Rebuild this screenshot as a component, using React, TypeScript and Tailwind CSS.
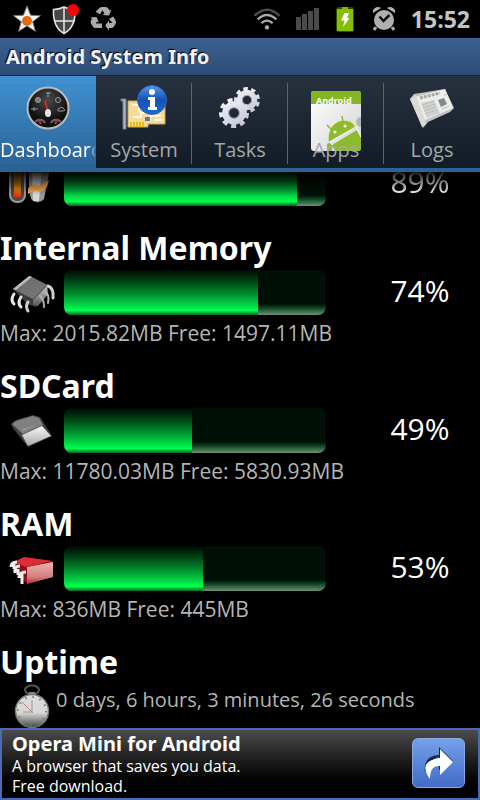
import type { ReactNode } from "react";

function StarIcon() {
  return (
    <svg width="32" height="32" viewBox="0 0 32 32" aria-hidden="true">
      <path d="M16 3l3.600 9.200 9.900.5-7.800 6 2.700 9.600L16 23l-8.400 5.300 2.700-9.600-7.800-6 9.900-.5z" fill="#f4f4f4" stroke="#777" strokeWidth="1" />
      <circle cx="16" cy="18" r="5" fill="#e66a10" />
    </svg>
  );
}

function ShieldIcon() {
  return (
    <svg width="32" height="32" viewBox="0 0 32 32" aria-hidden="true">
      <path d="M14 4c-4 2-7 2.500-10.500 2.500C3 17 6 26 14 30.500c8.500-4.500 11.500-13.500 11-24C22 6.500 18 6 14 4z" fill="#484848" stroke="#e6e6e6" strokeWidth="1.500" />
      <path d="M14 4v26M4 18h21" stroke="#e6e6e6" strokeWidth="1.500" />
      <circle cx="23" cy="7" r="6" fill="#f00808" />
    </svg>
  );
}

function RecycleIcon() {
  return (
    <svg width="28" height="26" viewBox="0 0 28 26" fill="#aaa" aria-hidden="true">
      <path d="M10 2.500Q11 1 12.500 1H17q1.500 0 2.300 1.500l1.200 2 2-1L20 9.500l-6.500-.5 2-1.200-2-3.500-2.500 4-4.500-2.500z" />
      <path d="M24.300 10.500l2.300 4q1 1.700 0 3.200l-1.800 3q-.8 1.300-2.500 1.300H20v2.500l-3.800-5 3.800-5v2.500h3.500l-3.500-4z" />
      <path d="M13 22H6.500q-1.700 0-2.500-1.300l-2-3.200q-.8-1.500 0-3l1-1.800L1 11.500l6.500-.5 2.500 5.500-2-1-1.200 2H13z" />
    </svg>
  );
}

function WifiIcon() {
  return (
    <svg width="28" height="24" viewBox="0 0 30 24" fill="none" strokeWidth="2.500" aria-hidden="true">
      <path d="M1.500 8.500Q15-4.500 28.500 8.500" stroke="#4b4b4b" />
      <path d="M5 12.500Q15 3 25 12.500" stroke="#aaa" />
      <path d="M9 16.500Q15 11 21 16.500" stroke="#aaa" />
      <circle cx="15" cy="21" r="2.200" fill="#b4b4b4" />
    </svg>
  );
}

function SignalIcon() {
  return (
    <svg width="24" height="22" viewBox="0 0 24 22" fill="#4a4a4a" aria-hidden="true">
      <path d="M0 9h5v13H0zM6 6h5v16H6zM12 3h5v19h-5zM18 0h5v22h-5z" />
    </svg>
  );
}

function BatteryIcon() {
  return (
    <svg width="22" height="28" viewBox="0 0 22 28" aria-hidden="true">
      <rect x="1" y="2" width="18" height="25" rx="3" fill="#2c4d00" />
      <path d="M7 2h6v2h5v22H2V4h5z" fill="#84bd0a" />
      <path d="M9.500 8H14l-2 5h2.500L8 22l1.500-6.500H6z" fill="#fff" />
    </svg>
  );
}

function AlarmIcon() {
  return (
    <svg width="24" height="26" viewBox="0 0 24 26" aria-hidden="true">
      <path d="M4 21l-2 3M20 21l2 3" stroke="#b0b0b0" strokeWidth="3" />
      <path d="M1 7q-1-3 2-5t6 0zM23 7q1-3-2-5t-6 0z" fill="#b0b0b0" />
      <circle cx="12" cy="14" r="10" fill="#b0b0b0" />
      <path d="M7.500 10.500l4 4.500 6-6" fill="none" stroke="#111" strokeWidth="2.500" />
    </svg>
  );
}

function GaugeIcon() {
  return (
    <svg width="48" height="48" viewBox="0 0 48 48" aria-hidden="true">
      <defs>
        <radialGradient id="dial" cy=".3">
          <stop offset="0" stopColor="#4a4a4a" />
          <stop offset="1" stopColor="#111" />
        </radialGradient>
      </defs>
      <circle cx="24" cy="24" r="20.500" fill="url(#dial)" stroke="#b9bcbf" strokeWidth="2" />
      <g fill="none" stroke="#999" strokeWidth="1">
        <circle cx="14" cy="16" r="2.500" fill="#777" />
        <circle cx="34" cy="16" r="2.500" />
        <path d="M7 25h7M10 23v4M34 27q-1-3 2-3 3-2 4 1 2 2-1 2zM22 9h5M24 8v5" />
      </g>
      <path d="M11 38a6 6 0 0 1 10 1M37 38a6 6 0 0 0-10 1" fill="none" stroke="#666" strokeWidth="2" />
      <path d="M14 35l3 5M34 35l-3 5" stroke="#c33" strokeWidth="2" />
      <path d="M21 17l3 11" stroke="#d02a22" strokeWidth="2" />
      <ellipse cx="24" cy="29" rx="3" ry="4" fill="#e4e4e4" />
    </svg>
  );
}

function SystemIcon() {
  return (
    <svg width="48" height="48" viewBox="0 0 48 48" aria-hidden="true">
      <defs>
        <linearGradient id="info" x2="0" y2="1">
          <stop offset="0" stopColor="#5599ea" />
          <stop offset=".5" stopColor="#1450b4" />
          <stop offset="1" stopColor="#1c6bd6" />
        </linearGradient>
      </defs>
      <path d="M8 17h37v23H28v3H8z" fill="#f2dc98" stroke="#c7a65a" />
      <path d="M11 38v5M14 38v5M17 38v5M20 38v5M23 38v5" stroke="#e7ba20" strokeWidth="2" />
      <path d="M12 21h7v6h6M13 33h8v-4h7M30 37v-5h11M35 36h7" fill="none" stroke="#fff8dd" strokeWidth="2" />
      <path d="M25 33h5v4h-5z" fill="#5e7893" />
      <path d="M1 15h5v30H3V17H1z" fill="#b2b4be" stroke="#777a86" />
      <circle cx="32" cy="16" r="14.500" fill="url(#info)" stroke="#2c66b4" />
      <circle cx="32" cy="8" r="3" fill="#fff" />
      <path d="M28 13h7v10h2v3h-9v-3h2v-7h-2z" fill="#fff" />
    </svg>
  );
}

function Gear({ x, y, r, turn }: { x: number; y: number; r: number; turn: number }) {
  return (
    <g transform={`translate(${x} ${y}) rotate(${turn}) scale(${r / 14})`} stroke="url(#steel)" fill="none">
      <circle r="8" strokeWidth="6" />
      <circle r="12" strokeWidth="4" strokeDasharray="4.600 3.778" />
      <circle r="5" stroke="#a2a4b4" strokeWidth="1" />
    </g>
  );
}

function GearsIcon() {
  return (
    <svg width="48" height="48" viewBox="0 0 48 48" aria-hidden="true">
      <defs>
        <linearGradient id="steel" gradientUnits="userSpaceOnUse" x1="-10" y1="-14" x2="8" y2="14">
          <stop offset="0" stopColor="#f6f6fb" />
          <stop offset="1" stopColor="#c3c4d2" />
        </linearGradient>
      </defs>
      <Gear x={31} y={16} r={13} turn={10} />
      <Gear x={18} y={29} r={15} turn={0} />
    </svg>
  );
}

function AppsIcon() {
  return (
    <svg width="50" height="60" viewBox="0 0 50 60" aria-hidden="true">
      <defs>
        <clipPath id="sheet"><rect width="50" height="60" rx="3" /></clipPath>
        <linearGradient id="paper" x2="1" y2="1">
          <stop offset="0" stopColor="#fff" />
          <stop offset="1" stopColor="#d4d4d4" />
        </linearGradient>
      </defs>
      <g clipPath="url(#sheet)">
        <rect width="50" height="60" fill="url(#paper)" />
        <rect width="50" height="13" fill="#84b522" />
        <text x="5" y="13" fill="#fff" fontSize="9" fontWeight="700" fontFamily="Noto Sans, sans-serif">Android</text>
        <path d="M18 51C16 36 26 28 36 30q6 1 9 7z" fill="#8dbb2c" />
        <path d="M21 54L46 39l4 7v14H24zM16 53q3-3 5 2v5h-5z" fill="#8dbb2c" />
        <path d="M16 34l5 5M31 25l1 6" stroke="#8dbb2c" strokeWidth="1.500" />
        <path d="M19 51l26-15 5 10" fill="none" stroke="#eee" strokeWidth="1.500" />
        <circle cx="24" cy="41" r="1.500" fill="#fff" />
        <circle cx="34" cy="35" r="1.500" fill="#fff" />
        <circle cx="50" cy="31" r="5" fill="#b0b5b8" />
      </g>
    </svg>
  );
}

function LogsIcon() {
  return (
    <svg width="48" height="48" viewBox="0 0 48 48" aria-hidden="true">
      <path d="M2 15l4-5 31-5 9 19-4 4-22 10-5 6z" fill="#bfc3c2" />
      <path d="M7 13l30-8 8 19-28 12z" fill="#eceeea" />
      <path d="M2 15l6-4 10 29-4 3z" fill="#d9dbd7" />
      <path d="M12 14l20-5" stroke="#aaa" strokeWidth="3" strokeDasharray="3 1" />
      <path d="M13 19l13-3 6 13-13 5z" fill="#cfd2d0" />
      <path d="M14 21l12-4M15 24l12-4M16 27l12-4M17 30l12-4M34 25l7-3M36 11l3-1" stroke="#b9bdbb" strokeWidth="1" />
      <path d="M30 16l6-2 3 6-6 3z" fill="#85898b" />
    </svg>
  );
}

function BatteryTemperatureIcon() {
  return (
    <svg width="48" height="45" viewBox="0 0 48 45" aria-hidden="true">
      <defs>
        <linearGradient id="heat" x2="0" y2="1">
          <stop offset=".4" stopColor="#a66d12" />
          <stop offset=".7" stopColor="#e88b10" />
          <stop offset="1" stopColor="#dc1808" />
        </linearGradient>
      </defs>
      <rect x="2" y="2" width="15" height="39" rx="7" fill="#4a4a4a" stroke="#999" strokeWidth="2" />
      <rect x="6" y="8" width="7" height="29" rx="2" fill="url(#heat)" />
      <path d="M21 2h22l-7 36q-5 6-12 1-4-5-3-37z" fill="#999" />
      <path d="M24 5h10l-3 35h-6z" fill="#d5d5d5" />
      <path d="M20 27q7-6 12-2 4-4 9-6-2 12-10 12-4-3-11 2z" fill="#f3ad50" />
    </svg>
  );
}

function ChipIcon() {
  return (
    <svg width="48" height="45" viewBox="0 0 48 45" aria-hidden="true">
      <defs>
        <linearGradient id="chip" x2="1" y2="1">
          <stop offset="0" stopColor="#6a6a6a" />
          <stop offset="1" stopColor="#787878" />
        </linearGradient>
        <linearGradient id="side" x2="0" y2="1">
          <stop offset="0" stopColor="#ccc" />
          <stop offset="1" stopColor="#555" />
        </linearGradient>
      </defs>
      <path d="M5 19L22 6l18 9-2 12-10 10-9-3z" fill="#3c3c3c" />
      <path d="M5 19L22 6l17 9-14 14z" fill="url(#chip)" />
      <path d="M5 19L21 6l3 1L8 20z" fill="#bbb" />
      <path d="M25 30l14-14 1 8-10 12-5-1z" fill="url(#side)" />
      <g fill="none" strokeWidth="3" strokeLinecap="round">
        <path d="M6 24q-4 6 0 10M13 27q-4 6 0 10" stroke="#e6e6e6" />
        <path d="M20 32q-3 4 0 9M40 16q6 2 5 12" stroke="#cfcfcf" />
        <path d="M36 21q6 3 4 12M32 26q4 3 4 11" stroke="#b4b4b4" strokeWidth="2" />
      </g>
    </svg>
  );
}

function SdCardIcon() {
  return (
    <svg width="48" height="45" viewBox="0 0 48 45" aria-hidden="true">
      <defs>
        <linearGradient id="label" x2="0" y2="1">
          <stop offset="0" stopColor="#f8f8f8" />
          <stop offset="1" stopColor="#aaa" />
        </linearGradient>
      </defs>
      <path d="M3 16l5-4 17-5 7 2 12 19-24 11L5 20z" fill="#444" />
      <path d="M4 16l4-3 17-5 6 2 4 7-20 9z" fill="#808080" />
      <path d="M14 27l20-9 9 10-23 10z" fill="url(#label)" />
      <path d="M14 21l14-4-13 6z" fill="#999" />
    </svg>
  );
}

function RamIcon() {
  return (
    <svg width="48" height="45" viewBox="0 0 48 45" aria-hidden="true">
      <defs>
        <linearGradient id="case" x2="0" y2="1">
          <stop offset="0" stopColor="#f0b4b4" />
          <stop offset=".7" stopColor="#cf7c7c" />
          <stop offset="1" stopColor="#b02a30" />
        </linearGradient>
      </defs>
      <path d="M6 16l10-5 28 4 1 16-26 7L8 26z" fill="#8c1218" />
      <path d="M19 21l26-5v15l-26 7z" fill="url(#case)" />
      <path d="M6 16l10-5 28 4-26 6z" fill="#dc2c34" />
      <g fill="none" stroke="#eee" strokeWidth="3">
        <path d="M9 16q-6 0-6 5M6 18v5M12 20q-6 0-5 7M10 23v6M18 26q-7 0-7 6M14 27v11" />
      </g>
    </svg>
  );
}

function StopwatchIcon() {
  return (
    <svg width="36" height="45" viewBox="0 0 36 45" aria-hidden="true">
      <defs>
        <linearGradient id="face" x2="0" y2="1">
          <stop offset="0" stopColor="#ddd" />
          <stop offset=".55" stopColor="#d8d8d8" />
          <stop offset="1" stopColor="#444" />
        </linearGradient>
      </defs>
      <ellipse cx="18" cy="6" rx="7" ry="4.500" fill="none" stroke="#555" strokeWidth="2" />
      <path d="M15 8h6v5h-6z" fill="#888" />
      <circle cx="18" cy="27" r="16.500" fill="url(#face)" stroke="#777" strokeWidth="1.500" />
      <circle cx="18" cy="27" r="14" fill="none" stroke="#777" strokeWidth="2" strokeDasharray="1.500 5.830" />
      <path d="M18 28V16M18 28H9" stroke="#999" />
      <path d="M19 29L8 18" stroke="#c9807a" strokeWidth="1" />
    </svg>
  );
}

function ShareArrowIcon() {
  return (
    <svg width="32" height="34" viewBox="0 0 32 34" aria-hidden="true">
      <path d="M16 1l14 14-14 9V11Q5 14 2 26 0 10 16 9z" fill="#10264a" />
      <path d="M17 3l13 13-13 13v-9q-10-1-10 13-13-18 10-21z" fill="#fff" />
    </svg>
  );
}

const tabs: { name: string; icon: ReactNode }[] = [
  { name: "Dashboard", icon: <GaugeIcon /> },
  { name: "System", icon: <SystemIcon /> },
  { name: "Tasks", icon: <GearsIcon /> },
  { name: "Apps", icon: <AppsIcon /> },
  { name: "Logs", icon: <LogsIcon /> },
];

const meters = [
  { name: "Internal Memory", icon: <ChipIcon />, value: 74, detail: "Max: 2015.82MB Free: 1497.11MB" },
  { name: "SDCard", icon: <SdCardIcon />, value: 49, detail: "Max: 11780.03MB Free: 5830.93MB" },
  { name: "RAM", icon: <RamIcon />, value: 53, detail: "Max: 836MB Free: 445MB" },
];

function MeterRow({ icon, value }: { icon: ReactNode; value: number }) {
  return (
    <div className="flex h-[45px] items-center">
      <div className="flex w-16 shrink-0 justify-center">{icon}</div>
      <div className="h-full min-w-0 flex-1 overflow-hidden rounded-lg bg-linear-to-b from-[#001006] from-75% via-[#1d5a33] via-88% to-[#6f8f78]">
        <div
          className="h-full bg-linear-to-b from-[#000a03] via-[#00ff50] via-90% to-[#00641f]"
          style={{ width: `${value}%` }}
        />
      </div>
      <div className="ml-[34px] h-full w-[120px] shrink-0 text-center text-[30px] leading-[41px] text-white">{value}%</div>
    </div>
  );
}

function Heading({ children }: { children: ReactNode }) {
  return <h2 className="h-[38px] font-['Noto_Sans',sans-serif] text-[32px] leading-[32px] font-bold text-white">{children}</h2>;
}

export default function App() {
  return (
    <div className="flex h-screen flex-col overflow-hidden bg-black font-['Open_Sans','Noto_Sans',sans-serif]">
      <header className="flex h-[38px] shrink-0 items-center justify-between pr-[10px] pl-[11px]">
        <div className="flex items-center gap-[7px]">
          <StarIcon />
          <ShieldIcon />
          <RecycleIcon />
        </div>
        <div className="flex items-center gap-[15px]">
          <WifiIcon />
          <SignalIcon />
          <BatteryIcon />
          <AlarmIcon />
          <time className="text-[23px] leading-[38px] font-bold text-[#c4c4c4]">15:52</time>
        </div>
      </header>

      <h1 className="h-[38px] shrink-0 border-b border-[#152238] bg-linear-to-b from-[#3c618f] to-[#2d4d79] pl-[6px] font-['Noto_Sans',sans-serif] text-[20px] leading-[37px] font-bold text-[#f2f2f2] [text-shadow:-1px_-1px_1px_#000]">
        Android System Info
      </h1>

      <nav className="grid h-24 shrink-0 grid-cols-5 border-b-4 border-[#2b6396] bg-linear-to-b from-[#28323f] to-[#121c27]">
        {tabs.map((tab, i) => (
          <button
            key={tab.name}
            type="button"
            aria-current={i === 0 ? "page" : undefined}
            className={
              i === 0
                ? "relative flex flex-col items-center overflow-hidden bg-linear-to-b from-[#4092d2] to-[#2b6396] pt-2 text-white"
                : "relative flex flex-col items-center overflow-hidden pt-2 text-[#a3a7ab]"
            }
          >
            <span className="flex h-[52px] items-start justify-center">
              <span className={tab.name === "Apps" ? "pt-[7px]" : ""}>{tab.icon}</span>
            </span>
            <span
              className={
                i === 0
                  ? "w-full overflow-hidden text-left text-[20px] leading-[28px] whitespace-nowrap [mask-image:linear-gradient(to_right,#000_92%,transparent)]"
                  : "relative text-[20px] leading-[28px]"
              }
            >
              {tab.name}
            </span>
            {i > 0 && i < 4 && <span className="absolute top-[7px] right-0 h-[81px] w-px bg-[#5b646d]" />}
          </button>
        ))}
      </nav>

      <main className="min-h-0 flex-1 overflow-hidden">
        <div className="h-[58px] overflow-hidden">
          <div className="-mt-[11px] [mask-image:linear-gradient(to_bottom,transparent_8px,#000_34px)]">
            <MeterRow icon={<BatteryTemperatureIcon />} value={89} />
          </div>
        </div>
        {meters.map((meter) => (
          <section key={meter.name} className="h-[138px] pt-[2px]">
            <Heading>{meter.name}</Heading>
            <MeterRow icon={meter.icon} value={meter.value} />
            <p className="text-[21px] leading-[36px] whitespace-nowrap text-[#b5b5b5]">{meter.detail}</p>
          </section>
        ))}
        <section className="pt-[2px]">
          <Heading>Uptime</Heading>
          <div className="flex">
            <div className="flex w-14 justify-center pl-2"><StopwatchIcon /></div>
            <p className="text-[20px] leading-[32px] whitespace-nowrap text-[#b5b5b5]">0 days, 6 hours, 3 minutes, 26 seconds</p>
          </div>
        </section>
      </main>

      <a href="#ad" className="flex h-[72px] shrink-0 items-center justify-between border-2 border-[#486cb8] bg-linear-to-b from-[#4c4c4c] to-black pr-[13px] pl-[10px] text-white">
        <span className="flex flex-col">
          <strong className="font-['Noto_Sans',sans-serif] text-[20px] leading-[24px]">Opera Mini for Android</strong>
          <span className="text-[16px] leading-5">A browser that saves you data.</span>
          <span className="text-[16px] leading-5">Free download.</span>
        </span>
        <span className="mb-[2px] flex h-[50px] w-[53px] items-center justify-center rounded-md border border-[#8ba9e0] bg-linear-to-b from-[#75a0eb] to-[#426cc6]">
          <ShareArrowIcon />
        </span>
      </a>
    </div>
  );
}
